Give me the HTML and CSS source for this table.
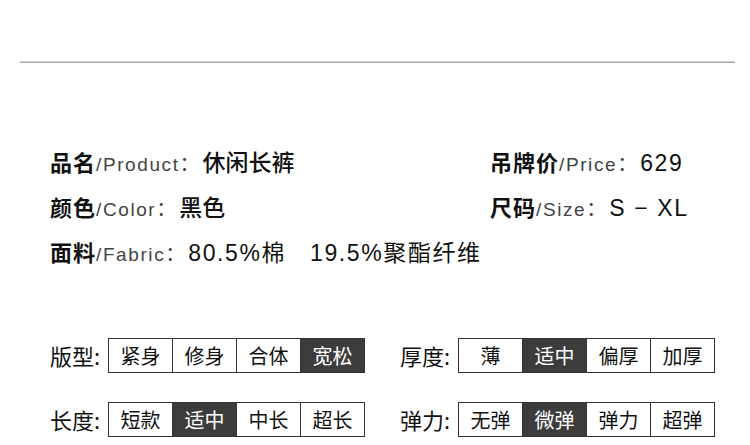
FILE: index.html
```html
<!DOCTYPE html>
<html>
<head>
  <link rel="stylesheet" href="styles.css">
</head>
<body>

  <div class="rule"></div>

  <div class="info">
    <p class="info-item"><b>品名</b><span class="en">/Product</span><span class="colon">：</span><span class="val">休闲长裤</span></p>
    <p class="info-item"><b>吊牌价</b><span class="en">/Price</span><span class="colon">：</span><span class="val num">629</span></p>
    <p class="info-item"><b>颜色</b><span class="en">/Color</span><span class="colon">：</span><span class="val">黑色</span></p>
    <p class="info-item"><b>尺码</b><span class="en">/Size</span><span class="colon">：</span><span class="val num">S − XL</span></p>
    <p class="info-item wide"><b>面料</b><span class="en">/Fabric</span><span class="colon">：</span><span class="val num">80.5%棉&nbsp;&nbsp;&nbsp;19.5%聚酯纤维</span></p>
  </div>

  <div class="attrs">
    <div class="attr">
      <span class="attr-name">版型:</span>
      <ul class="options">
        <li>紧身</li><li>修身</li><li>合体</li><li class="on">宽松</li>
      </ul>
    </div>
    <div class="attr">
      <span class="attr-name">厚度:</span>
      <ul class="options">
        <li>薄</li><li class="on">适中</li><li>偏厚</li><li>加厚</li>
      </ul>
    </div>
    <div class="attr">
      <span class="attr-name">长度:</span>
      <ul class="options">
        <li>短款</li><li class="on">适中</li><li>中长</li><li>超长</li>
      </ul>
    </div>
    <div class="attr">
      <span class="attr-name">弹力:</span>
      <ul class="options">
        <li>无弹</li><li class="on">微弹</li><li>弹力</li><li>超弹</li>
      </ul>
    </div>
  </div>

</body>
</html>
```

FILE: styles.css
```css
body {
  margin: 0;
  background: #fff;
  color: #111;
  font-family: "Liberation Sans", "Noto Sans CJK SC", sans-serif;
}

/* thin grey divider at the top */
.rule {
  margin: 61px 15px 0 20px;
  height: 1px;
  border-top: 1px solid #d8d8d8;
  background: #a8a8a8;
}

.info {
  display: grid;
  grid-template-columns: 440px auto;
  grid-auto-rows: 45px;
  margin: 76px 0 0 50px;
}

p.info-item {
  margin: 0;
  display: flex;
  align-items: baseline;
  line-height: 45px;
  white-space: nowrap;
  font-size: 22px;
}

.info-item.wide {
  grid-column: 1 / 3;
}

.info-item b {
  font-family: "Noto Sans CJK SC", sans-serif;
  font-weight: 700;
  font-size: 22px;
  letter-spacing: 1px;
}

.info-item .en {
  font-size: 19px;
  letter-spacing: 1.6px;
  color: #444;
}

.info-item .colon {
  font-family: "Noto Sans CJK SC", sans-serif;
  font-size: 20px;
  color: #444;
  width: 20px;
}

.info-item .val {
  font-family: "Noto Sans CJK SC", sans-serif;
  font-weight: 500;
  font-size: 23px;
  margin-left: 3px;
}

.info-item .val.num {
  font-family: "Liberation Sans", "Noto Sans CJK SC", sans-serif;
  font-weight: 400;
  font-size: 23px;
  letter-spacing: 1.6px;
}

.attrs {
  display: grid;
  grid-template-columns: 315px 315px;
  column-gap: 35px;
  row-gap: 29px;
  margin: 64px 0 0 50px;
}

.attr {
  display: flex;
  align-items: center;
}

.attr-name {
  width: 60px;
  line-height: 33px;
  font-family: "Noto Sans CJK SC", sans-serif;
  font-size: 22px;
  color: #111;
}

ul.options {
  display: flex;
  margin: 0;
  padding: 0;
  list-style-type: none;
  border: 1px solid #333;
}

ul.options li {
  width: 63px;
  height: 33px;
  line-height: 33px;
  text-align: center;
  font-family: "Noto Sans CJK SC", sans-serif;
  font-size: 20px;
  border-left: 1px solid #333;
}

ul.options li:first-child {
  border-left: none;
}

ul.options li.on {
  background: #3c3c3c;
  color: #fff;
}
```
